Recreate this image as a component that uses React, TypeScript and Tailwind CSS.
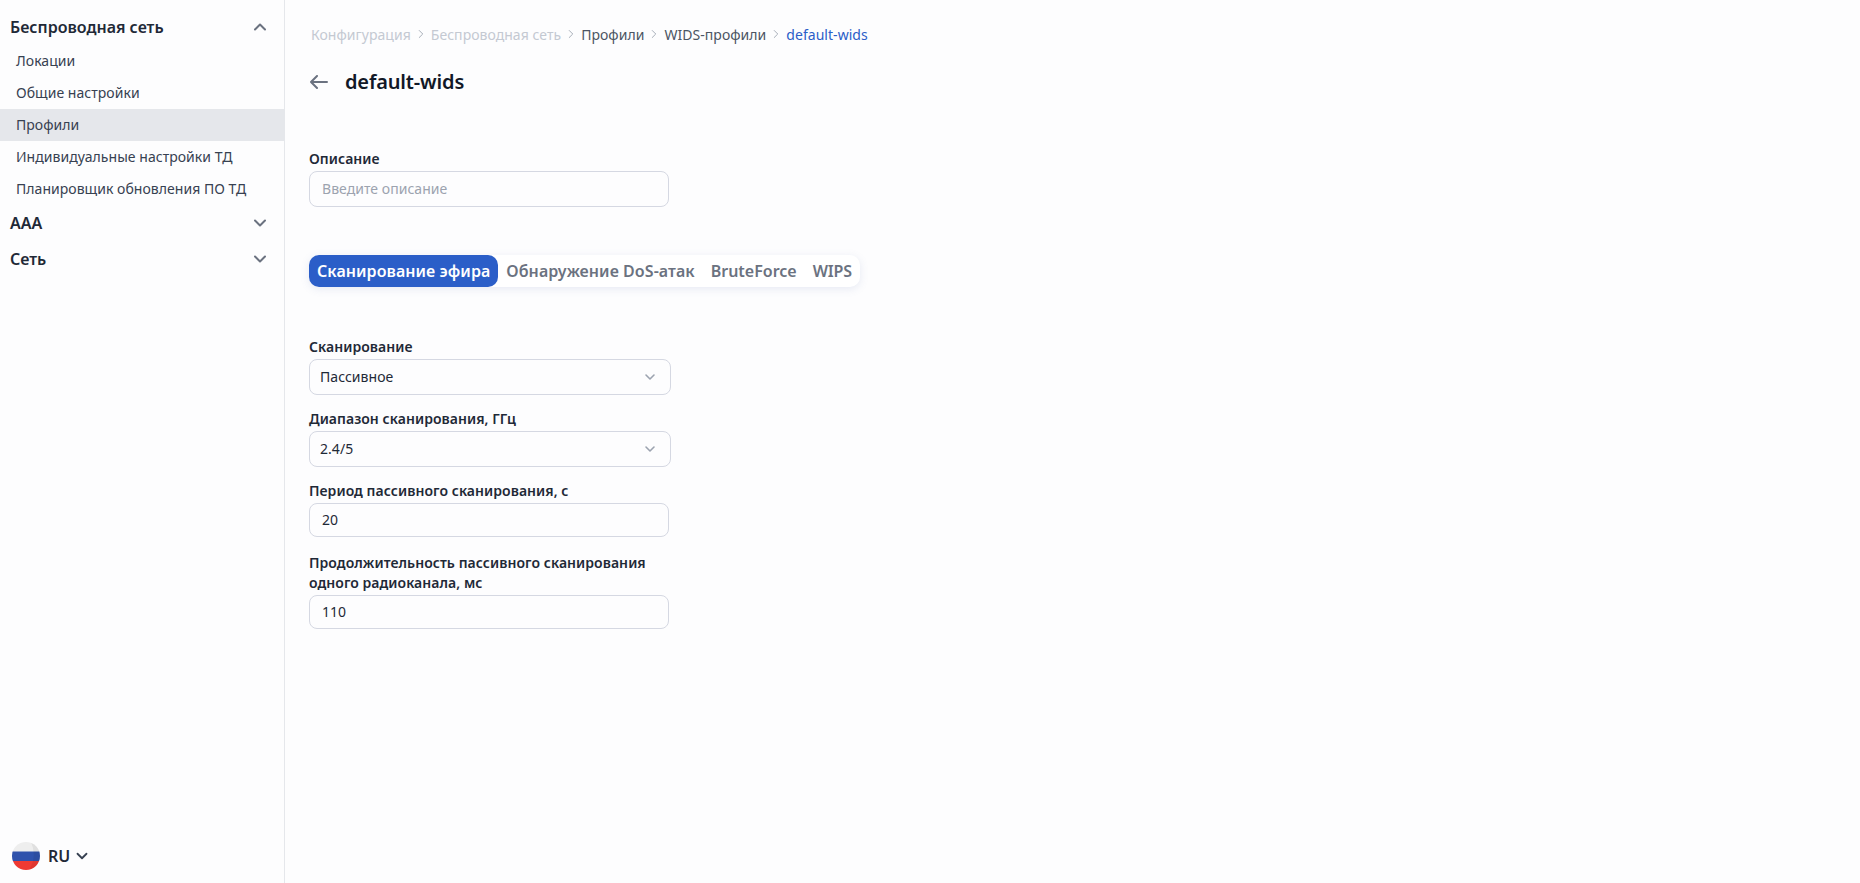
import { ChevronDown, ChevronUp, ChevronRight } from "lucide-react";

const font = "font-['Noto_Sans','Open_Sans',sans-serif]";

function NavHead({ label, open }: { label: string; open?: boolean }) {
  return (
    <div className="flex h-9 items-center justify-between pl-[10px] pr-[14px]">
      <span className="text-[16px] font-semibold text-[#1f2937]">{label}</span>
      {open ? (
        <ChevronUp size={20} strokeWidth={2.4} className="text-[#6b7280]" />
      ) : (
        <ChevronDown size={20} strokeWidth={2.4} className="text-[#6b7280]" />
      )}
    </div>
  );
}

function NavItem({ label, active }: { label: string; active?: boolean }) {
  return (
    <div className={`flex h-8 items-center pb-[2px] pl-4 text-[14px] tracking-[0.04px] text-[#374151] ${active ? "bg-[#e5e7eb]" : ""}`}>
      {label}
    </div>
  );
}

function Crumb({ label, cls, last }: { label: string; cls: string; last?: boolean }) {
  return (
    <>
      <span className={cls}>{label}</span>
      {!last && <ChevronRight size={14} strokeWidth={1.5} className="mx-[3px] text-[#9ca3af]" />}
    </>
  );
}

function Field({
  label,
  value,
  placeholder,
  kind,
}: {
  label: string;
  value?: string;
  placeholder?: string;
  kind: "select" | "input" | "desc";
}) {
  const select = kind === "select";
  return (
    <div className={select ? "w-[362px]" : "w-[360px]"}>
      <div className="mb-[2px] text-[14px] font-semibold leading-[20px] tracking-[0.05px] text-[#1f2937]">{label}</div>
      <div
        className={`flex items-center justify-between rounded-[8px] border border-[#d5d8e2] bg-[#fdfdfe] pr-[12px] text-[14px] tracking-[0.04px] ${
          kind === "input" ? "h-[34px]" : "h-[36px]"
        } ${select ? "pl-[10px]" : "pl-[12px]"} ${placeholder ? "text-[#9ca3af]" : "text-[#1f2937]"}`}
      >
        <span className="-translate-y-px">{value ?? placeholder}</span>
        {select && <ChevronDown size={16} strokeWidth={2.4} className="text-[#9ca3af]" />}
      </div>
    </div>
  );
}

export default function App() {
  return (
    <div className={`${font} flex h-[883px] w-full overflow-hidden bg-[#fdfdfe]`}>
      <aside className="flex w-[285px] shrink-0 flex-col justify-between border-r border-[#e5e7eb] pt-[9px]">
        <div>
          <NavHead label="Беспроводная сеть" open />
          <NavItem label="Локации" />
          <NavItem label="Общие настройки" />
          <NavItem label="Профили" active />
          <NavItem label="Индивидуальные настройки ТД" />
          <NavItem label="Планировщик обновления ПО ТД" />
          <NavHead label="ААА" />
          <NavHead label="Сеть" />
        </div>
        <div className="flex items-center pb-[13px] pl-3">
          <svg width="28" height="28" viewBox="0 0 28 28" className="mr-2">
            <defs>
              <clipPath id="c">
                <circle cx="14" cy="14" r="14" />
              </clipPath>
            </defs>
            <g clipPath="url(#c)">
              <rect width="28" height="10" fill="#eeeeee" />
              <rect y="9.5" width="28" height="9.5" fill="#2f52ac" />
              <rect y="19" width="28" height="9" fill="#ee3a33" />
              <path d="M19 0 A14 14 0 0 1 17 28 A30 30 0 0 0 19 0Z" fill="#000000" fillOpacity="0.06" />
            </g>
          </svg>
          <span className="text-[16px] font-semibold text-[#1f2937]">RU</span>
          <ChevronDown size={18} strokeWidth={2.4} className="ml-[3px] text-[#374151]" />
        </div>
      </aside>
      <main className="flex-1 pl-[24px] pt-[23px]">
        <div className="flex h-[22px] items-center pl-[2px] text-[14px] tracking-[0.04px]">
          <Crumb label="Конфигурация" cls="text-[#c4c9d2]" />
          <Crumb label="Беспроводная сеть" cls="text-[#c4c9d2]" />
          <Crumb label="Профили" cls="text-[#4b5563]" />
          <Crumb label="WIDS-профили" cls="text-[#4b5563]" />
          <Crumb label="default-wids" cls="text-[#2b5ec8]" last />
        </div>
        <div className="mt-[22px] flex h-[30px] items-center">
          <svg width="18" height="14" viewBox="0 0 18 14" fill="none" stroke="#6b7280" strokeWidth="2" strokeLinecap="round" strokeLinejoin="round" className="ml-px">
            <path d="M7 1 L1 7 L7 13 M1 7 H17" />
          </svg>
          <span className="ml-[17px] text-[20px] font-semibold tracking-[-0.15px] text-[#111827]">default-wids</span>
        </div>
        <div className="mt-[52px]">
          <Field kind="desc" label="Описание" placeholder="Введите описание" />
        </div>
        <div className="mt-[48px] flex h-[32px] w-fit items-center rounded-[10px] bg-white text-[16px] font-semibold text-[#6b7280] shadow-[0_2px_8px_rgba(99,120,180,0.15)]">
          <div className="flex h-full items-center rounded-[10px] bg-[#2b5ec8] px-2 tracking-[0.06px] text-white">Сканирование эфира</div>
          <div className="px-2 tracking-[0.06px]">Обнаружение DoS-атак</div>
          <div className="px-2">BruteForce</div>
          <div className="pl-2 pr-[8px] tracking-[-0.2px]">WIPS</div>
        </div>
        <div className="mt-[50px] flex flex-col">
          <Field kind="select" label="Сканирование" value="Пассивное" />
          <div className="mt-[14px]">
            <Field kind="select" label="Диапазон сканирования, ГГц" value="2.4/5" />
          </div>
          <div className="mt-[14px]">
            <Field kind="input" label="Период пассивного сканирования, с" value="20" />
          </div>
          <div className="mt-[16px]">
            <Field kind="input" label="Продолжительность пассивного сканирования одного радиоканала, мс" value="110" />
          </div>
        </div>
      </main>
    </div>
  );
}
